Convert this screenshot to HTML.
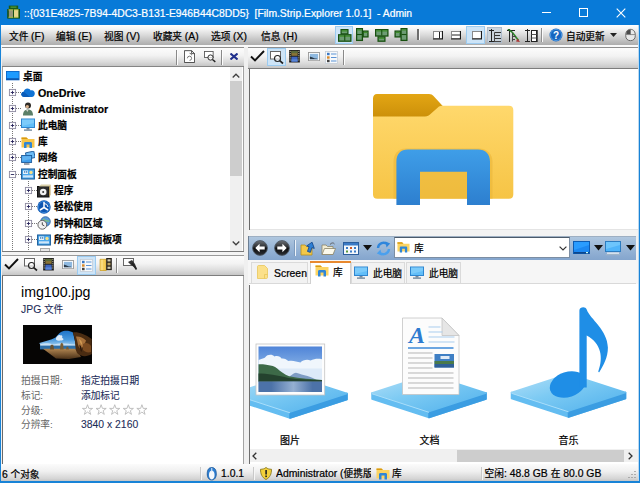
<!DOCTYPE html>
<html><head><meta charset="utf-8"><title>Film.Strip.Explorer</title>
<style>
*{margin:0;padding:0;box-sizing:border-box}
html,body{width:640px;height:483px;overflow:hidden;background:#fff}
body{position:relative;font-family:"Liberation Sans","Noto Sans CJK SC",sans-serif;font-size:10px;color:#000}
.a{position:absolute}
.t{position:absolute;white-space:nowrap;line-height:12px;height:12px;font-size:9.7px;-webkit-text-stroke:.22px currentColor}
.t b,.t i{font-style:normal;font-weight:inherit;font-size:10.4px}
.tb{background:linear-gradient(#fcfcfc 0%,#f3f3f3 40%,#dcdcdc 75%,#c6c6c6 100%)}
.tree .t{font-weight:bold;font-size:9.7px}
.tree .t b{font-size:10.7px}
.lbl{color:#666;-webkit-text-stroke:0}
.val{color:#1b2b58;-webkit-text-stroke:.08px}
</style></head><body>
<div class="a" style="left:0px;top:0px;width:640px;height:483px;background:#1883d7;"></div>
<div class="a" style="left:0px;top:0px;width:640px;height:25px;background:#087ad8;"></div>
<div class="t " style="left:24px;top:7.5px;color:#fff"><b style="font-size:10.35px">::{031E4825-7B94-4DC3-B131-E946B44C8DD5}&nbsp; [Film.Strip.Explorer 1.0.1]&nbsp; - Admin</b></div>
<svg class="a" style="left:7px;top:5px" width="14" height="14" viewBox="0 0 14 14"><rect x="1.800" y=".6" width="9.400" height="4" fill="#1a5a18"/>
<rect x=".2" y="4" width="12.800" height="9.600" fill="#154f14"/>
<rect x="3.500" y="1.500" width="6" height="1.300" fill="#4f9a3a"/>
<rect x="1.800" y="5" width="4.200" height="7" fill="#97957a"/><rect x="6.800" y="5" width="4.600" height="7" fill="#e6d68c"/>
<rect x="1.500" y="4.300" width="10" height="1" fill="#b8c850"/><rect x="1.500" y="11.800" width="10" height="1" fill="#b8c850"/>
<rect x="6" y="4.300" width=".9" height="8.500" fill="#154f14"/></svg>
<div class="a" style="left:542px;top:12px;width:9px;height:1px;background:#fff;"></div>
<div class="a" style="left:579px;top:8px;width:9px;height:9px;border:1px solid #fff"></div>
<svg class="a" style="left:616px;top:7.5px" width="10" height="10" viewBox="0 0 10 10"><path d="M.7 .7L9.300 9.300M9.300 .7L.7 9.300" stroke="#fff" stroke-width="1.100" fill="none"/></svg>
<div class="a" style="left:1px;top:25px;width:637px;height:456px;background:#f0f0f0;"></div>
<div class="a" style="left:638px;top:25px;width:1px;height:456px;background:#bcd9f0;"></div>
<div class="a" style="left:1px;top:25px;width:637px;height:20px;background:linear-gradient(#ffffff 0%,#f4f4f4 20%,#dadada 50%,#bebebe 80%,#adadad 100%);"></div>
<div class="a" style="left:1px;top:45px;width:637px;height:2px;background:#fafafa;"></div>
<div class="t " style="left:9px;top:30.7px;">文件 <b>(F)</b></div>
<div class="t " style="left:56px;top:30.7px;">编辑 <b>(E)</b></div>
<div class="t " style="left:104px;top:30.7px;">视图 <b>(V)</b></div>
<div class="t " style="left:153px;top:30.7px;">收藏夹 <b>(A)</b></div>
<div class="t " style="left:211px;top:30.7px;">选项 <b>(X)</b></div>
<div class="t " style="left:261px;top:30.7px;">信息 <b>(H)</b></div>
<div class="a" style="left:335px;top:26px;width:18px;height:18px;background:#cde4f7;border:1px solid #9ccbf0"></div>
<svg class="a" style="left:338px;top:28.7px" width="14" height="14" viewBox="0 0 14 14"><rect x="3.1" y="0.6" width="6.8" height="4.3" fill="#6d9c74" stroke="#17500f" stroke-width="1.300"/><rect x="3.8" y="1.3" width="5.4" height="1.200" fill="#3f8f2a"/><rect x="0.6" y="5.8" width="12.3" height="6.3999999999999995" fill="#6d9c74" stroke="#17500f" stroke-width="1.300"/><rect x="1.3" y="6.5" width="10.9" height="1.200" fill="#3f8f2a"/><path d="M6.75 6.2V11.8" stroke="#17500f" stroke-width="1.100"/></svg>
<svg class="a" style="left:356px;top:27.8px" width="14" height="14" viewBox="0 0 14 14"><rect x="0.6" y="0.6" width="5.8" height="11.8" fill="#6d9c74" stroke="#17500f" stroke-width="1.300"/><rect x="1.3" y="1.3" width="4.4" height="1.200" fill="#3f8f2a"/><path d="M1 6.5H6" stroke="#17500f" stroke-width="1.100"/><rect x="7.199999999999999" y="3.1" width="4.8" height="5.8" fill="#6d9c74" stroke="#17500f" stroke-width="1.300"/><rect x="7.8999999999999995" y="3.8" width="3.4" height="1.200" fill="#3f8f2a"/></svg>
<svg class="a" style="left:374.5px;top:28.5px" width="14" height="14" viewBox="0 0 14 14"><rect x="0.6" y="0.6" width="12.3" height="6.3999999999999995" fill="#6d9c74" stroke="#17500f" stroke-width="1.300"/><rect x="1.3" y="1.3" width="10.9" height="1.200" fill="#3f8f2a"/><path d="M6.75 1V6.6" stroke="#17500f" stroke-width="1.100"/><rect x="3.1" y="7.8999999999999995" width="6.8" height="4.3" fill="#6d9c74" stroke="#17500f" stroke-width="1.300"/><rect x="3.8" y="8.6" width="5.4" height="1.200" fill="#3f8f2a"/></svg>
<svg class="a" style="left:393.5px;top:27.8px" width="14" height="14" viewBox="0 0 14 14"><rect x="7.1" y="0.6" width="5.8" height="11.8" fill="#6d9c74" stroke="#17500f" stroke-width="1.300"/><rect x="7.8" y="1.3" width="4.4" height="1.200" fill="#3f8f2a"/><path d="M7.5 6.5H12.5" stroke="#17500f" stroke-width="1.100"/><rect x="1.1" y="3.1" width="5.2" height="5.8" fill="#6d9c74" stroke="#17500f" stroke-width="1.300"/><rect x="1.8" y="3.8" width="3.8000000000000003" height="1.200" fill="#3f8f2a"/></svg>
<div class="a" style="left:417px;top:29px;width:2px;height:11px;background:#6e6e6e;"></div>
<div class="a" style="left:419px;top:29px;width:1px;height:11px;background:#f8f8f8;"></div>
<svg class="a" style="left:432.5px;top:30.5px" width="10" height="9" viewBox="0 0 10 9"><rect x=".5" y=".5" width="9" height="7" fill="#fff" stroke="#8a8a8a" stroke-width="1"/><path d="M0 8H10M9.500 0V8" stroke="#1a1a1a" stroke-width="1.200" fill="none"/><path d="M6.500 1V7.500" stroke="#222"/></svg>
<svg class="a" style="left:451px;top:30.5px" width="10" height="9" viewBox="0 0 10 9"><rect x=".5" y=".5" width="9" height="7" fill="#fff" stroke="#8a8a8a" stroke-width="1"/><path d="M0 8H10M9.500 0V8" stroke="#1a1a1a" stroke-width="1.200" fill="none"/><path d="M1 4H9" stroke="#222"/></svg>
<div class="a" style="left:466px;top:26px;width:19px;height:18px;background:#cde4f7;border:1px solid #9ccbf0"></div>
<svg class="a" style="left:471.5px;top:30.5px" width="10" height="9" viewBox="0 0 10 9"><rect x=".5" y=".5" width="9" height="7" fill="#fff" stroke="#8a8a8a" stroke-width="1"/><path d="M0 8H10M9.500 0V8" stroke="#1a1a1a" stroke-width="1.200" fill="none"/></svg>
<div class="a" style="left:487px;top:27px;width:15px;height:16px;background:#c9d3dc;border:1px solid #aebccb"></div>
<svg class="a" style="left:489px;top:29px" width="13" height="14" viewBox="0 0 13 14"><path d="M2.500 0V13M0 1.500H5M0 12.500H6" stroke="#222" fill="none"/><path d="M5.500 3.500H12M5.500 6.500H11M5.500 9.500H12" stroke="#333" fill="none"/><path d="M5.500 3.500V12.500H12" stroke="#444" fill="none"/></svg>
<svg class="a" style="left:507px;top:28.5px" width="14" height="14" viewBox="0 0 14 14"><path d="M2.500 0V13M0 1.500H8" stroke="#222" fill="none"/><path d="M1 0L5 3" stroke="#2a7a2a" stroke-width="1.600"/><path d="M5 3L11.500 11.500" stroke="#2f8a2a" stroke-width="1.700"/><path d="M5.500 7.500H9M5.500 10.500H8M5.500 4V12.500" stroke="#444" fill="none"/><path d="M10.500 9.500l2.500 3.500-4-.5z" fill="#a33"/></svg>
<svg class="a" style="left:525px;top:28.5px" width="13" height="14" viewBox="0 0 13 14"><path d="M2.500 0V13M0 1.500H5M0 12.500H5" stroke="#222" fill="none"/><rect x="6.500" y="1.500" width="5" height="11" fill="#fff" stroke="#222"/><path d="M6.500 5.500H11.500M6.500 9H11.500" stroke="#555"/><path d="M12.500 1V13" stroke="#555"/></svg>
<div class="a" style="left:541px;top:28px;width:1px;height:14px;background:#8f8f8f;"></div>
<div class="a" style="left:542px;top:28px;width:1px;height:14px;background:#fafafa;"></div>
<svg class="a" style="left:548.5px;top:27.5px" width="14" height="14" viewBox="0 0 14 14"><circle cx="7" cy="7" r="6.5" fill="#1565c0"/><circle cx="7" cy="7" r="5.6" fill="none" stroke="#5aa2e6" stroke-width=".8"/><text x="7" y="10.6" font-size="10" font-weight="bold" text-anchor="middle" fill="#fff" font-family="Liberation Sans,sans-serif">?</text></svg>
<div class="t " style="left:566px;top:30.5px;">自动更新</div>
<svg class="a" style="left:610px;top:33px" width="7" height="4" viewBox="0 0 7 4"><path d="M0 0H7L3.5 4z" fill="#222"/></svg>
<svg class="a" style="left:624.5px;top:28px" width="11" height="14" viewBox="0 0 13 15"><path d="M6.5 .8C10.5 .8 12.2 4 12.2 8 12.2 12 10 14.2 6.5 14.2 3 14.2 .8 12 .8 8 .8 4 2.500 .8 6.5 .8z" fill="#e9e9e9" stroke="#555" stroke-width="1"/><path d="M6.500 1V7M1.200 7H11.800" stroke="#666" stroke-width=".8" fill="none"/><path d="M1.500 6.500C1.500 3 3 1.300 6.200 1.300V6.500z" fill="#4a4a4a"/></svg>
<div class="a" style="left:2px;top:47px;width:242px;height:1px;background:#8e8e8e;"></div>
<div class="a tb" style="left:2px;top:48px;width:242px;height:18px"></div>
<div class="a" style="left:2px;top:66px;width:242px;height:1px;background:#858585;"></div>
<div class="a" style="left:176px;top:50px;width:1px;height:15px;background:#8a8a8a;"></div>
<div class="a" style="left:177px;top:50px;width:1px;height:15px;background:#fdfdfd;"></div>
<svg class="a" style="left:184px;top:49.6px" width="11" height="13.2" viewBox="0 0 13 15"><path d="M.5 .5H9L12.500 4V14.500H.5z" fill="#fff" stroke="#333"/><path d="M9 .5V4H12.500" fill="none" stroke="#333"/><path d="M4 9.500a2.500 2.500 0 1 1 2.500 2.500M6.500 3.500a2.500 2.500 0 0 1 2.500 2.500" fill="none" stroke="#555" stroke-width=".9"/></svg>
<svg class="a" style="left:203.5px;top:50.5px" width="12.2" height="12.2" viewBox="0 0 14 14"><rect x=".5" y=".5" width="10" height="7" fill="#fff" stroke="#555"/><circle cx="7.500" cy="7.500" r="3" fill="#fff" fill-opacity=".7" stroke="#222" stroke-width="1.100"/><path d="M9.700 9.700L13 12.500" stroke="#222" stroke-width="1.600"/></svg>
<div class="a" style="left:221px;top:50px;width:1px;height:15px;background:#8a8a8a;"></div>
<div class="a" style="left:222px;top:50px;width:1px;height:15px;background:#fdfdfd;"></div>
<svg class="a" style="left:230px;top:53px" width="8" height="7" viewBox="0 0 8 7"><path d="M.5 .5L7.500 6.500M7.500 .5L.5 6.500" stroke="#1f2f8c" stroke-width="2" fill="none"/></svg>
<div class="a" style="left:2px;top:67px;width:242px;height:184px;background:#fff;"></div>
<div class="a" style="left:2px;top:67px;width:1px;height:184px;background:#a0a0a0;"></div>
<div class="a" style="left:243px;top:67px;width:1px;height:185px;background:#a4a4a4;"></div>
<div class="a" style="left:230px;top:67px;width:12px;height:184px;background:#f0f0f0;"></div>
<div class="a" style="left:230px;top:81px;width:12px;height:95px;background:#cdcdcd;"></div>
<svg class="a" style="left:232px;top:72.5px" width="8" height="5" viewBox="0 0 8 5"><path d="M.7 4.500L4 1.200 7.300 4.500" stroke="#404040" stroke-width="1.300" fill="none"/></svg>
<svg class="a" style="left:232px;top:241px" width="8" height="5" viewBox="0 0 8 5"><path d="M.7 .5L4 3.800 7.300 .5" stroke="#404040" stroke-width="1.300" fill="none"/></svg>
<div class="tree"><div class="a" style="left:12px;top:83px;width:1px;height:168px;background:repeating-linear-gradient(#777 0 1px,transparent 1px 2px);"></div>
<div class="a" style="left:28px;top:181px;width:1px;height:70px;background:repeating-linear-gradient(#777 0 1px,transparent 1px 2px);"></div>
<svg class="a" style="left:6px;top:69px" width="14" height="14" viewBox="0 0 14 14"><rect x="0" y="2" width="13.500" height="9.300" fill="#0c62c4"/><rect x=".8" y="2.800" width="11.900" height="6.700" fill="#1e9bff"/><rect x=".8" y="9.500" width="11.900" height="1" fill="#0a4fa0"/></svg>
<div class="t " style="left:23px;top:70.8px;">桌面</div>
<div class="a" style="left:16px;top:92px;width:5px;height:1px;background:repeating-linear-gradient(90deg,#777 0 1px,transparent 1px 2px);"></div>
<svg class="a" style="left:8px;top:88px" width="9" height="9" viewBox="0 0 9 9"><rect x="1.400" y="1.400" width="6.200" height="6.200" fill="#fff" stroke="#8d8aa0" stroke-width=".9"/><path d="M2.800 4.500H6.200" stroke="#26225a" stroke-width=".9"/><path d="M4.500 2.800V6.200" stroke="#26225a" stroke-width=".9"/></svg>
<svg class="a" style="left:21px;top:86px" width="14" height="14" viewBox="0 0 14 14"><path d="M3.500 11C1.500 11 .3 9.800 .3 8.300C.3 6.900 1.300 5.900 2.700 5.700C3 3.800 4.500 2.500 6.400 2.500C7.900 2.500 9.100 3.300 9.800 4.500C10.100 4.400 10.500 4.300 10.900 4.300C12.600 4.300 13.800 5.700 13.800 7.600C13.800 9.500 12.500 11 10.800 11z" fill="#1173d4"/><path d="M3.500 11C1.500 11 .3 9.800 .3 8.300C.3 6.900 1.300 5.900 2.700 5.700L9 11z" fill="#0a5cb8"/></svg>
<div class="t " style="left:38px;top:87.13px;"><b>OneDrive</b></div>
<div class="a" style="left:16px;top:108px;width:5px;height:1px;background:repeating-linear-gradient(90deg,#777 0 1px,transparent 1px 2px);"></div>
<svg class="a" style="left:8px;top:104px" width="9" height="9" viewBox="0 0 9 9"><rect x="1.400" y="1.400" width="6.200" height="6.200" fill="#fff" stroke="#8d8aa0" stroke-width=".9"/><path d="M2.800 4.500H6.200" stroke="#26225a" stroke-width=".9"/><path d="M4.500 2.800V6.200" stroke="#26225a" stroke-width=".9"/></svg>
<svg class="a" style="left:21px;top:102px" width="14" height="14" viewBox="0 0 14 14"><circle cx="7" cy="3.600" r="3" fill="#2e2a26"/><circle cx="6.300" cy="4.600" r="1.700" fill="#d8b08a"/><path d="M2 13.500C2 9.500 3.800 7.500 7 7.500C10.200 7.500 12 9.500 12 13.500z" fill="#5a7f68"/><path d="M5 7.700L6.300 10 7.500 7.700z" fill="#d8d8d0"/></svg>
<div class="t " style="left:38px;top:103.46px;"><b>Administrator</b></div>
<div class="a" style="left:16px;top:125px;width:5px;height:1px;background:repeating-linear-gradient(90deg,#777 0 1px,transparent 1px 2px);"></div>
<svg class="a" style="left:8px;top:121px" width="9" height="9" viewBox="0 0 9 9"><rect x="1.400" y="1.400" width="6.200" height="6.200" fill="#fff" stroke="#8d8aa0" stroke-width=".9"/><path d="M2.800 4.500H6.200" stroke="#26225a" stroke-width=".9"/><path d="M4.500 2.800V6.200" stroke="#26225a" stroke-width=".9"/></svg>
<svg class="a" style="left:21px;top:118px" width="14" height="14" viewBox="0 0 14 14"><rect x=".5" y="1" width="13" height="8.500" fill="#62bef8" stroke="#2f86d0" stroke-width="1"/><path d="M1 1.500H13V5L1 8z" fill="#8ed4fc" fill-opacity=".6"/><rect x="5.500" y="10" width="3" height="1.500" fill="#7a8a99"/><rect x="3" y="11.500" width="8" height="1.200" fill="#5e7890"/></svg>
<div class="t " style="left:38px;top:119.79px;">此电脑</div>
<div class="a" style="left:16px;top:141px;width:5px;height:1px;background:repeating-linear-gradient(90deg,#777 0 1px,transparent 1px 2px);"></div>
<svg class="a" style="left:8px;top:137px" width="9" height="9" viewBox="0 0 9 9"><rect x="1.400" y="1.400" width="6.200" height="6.200" fill="#fff" stroke="#8d8aa0" stroke-width=".9"/><path d="M2.800 4.500H6.200" stroke="#26225a" stroke-width=".9"/><path d="M4.500 2.800V6.200" stroke="#26225a" stroke-width=".9"/></svg>
<svg class="a" style="left:21px;top:135px" width="14" height="14" viewBox="0 0 14 14"><path d="M.5 2.500H5.500L7 4H13.500V12.500H.5z" fill="#f7c64a"/><path d="M.5 2.500H5.500L7 4H.5z" fill="#d99a12"/><path d="M3 13V8.500C3 7.500 3.600 7 4.500 7H9.500C10.400 7 11 7.500 11 8.500V13H8.500V9.500H5.500V13z" fill="#2f86d6"/></svg>
<div class="t " style="left:38px;top:136.12px;">库</div>
<div class="a" style="left:16px;top:157px;width:5px;height:1px;background:repeating-linear-gradient(90deg,#777 0 1px,transparent 1px 2px);"></div>
<svg class="a" style="left:8px;top:153px" width="9" height="9" viewBox="0 0 9 9"><rect x="1.400" y="1.400" width="6.200" height="6.200" fill="#fff" stroke="#8d8aa0" stroke-width=".9"/><path d="M2.800 4.500H6.200" stroke="#26225a" stroke-width=".9"/><path d="M4.500 2.800V6.200" stroke="#26225a" stroke-width=".9"/></svg>
<svg class="a" style="left:21px;top:151px" width="14" height="14" viewBox="0 0 14 14"><rect x="5" y="1" width="8.500" height="6.500" fill="#6cbcf6" stroke="#1e5c9c" stroke-width=".9" transform="rotate(-12 9 4)"/><rect x=".6" y="4.500" width="10" height="7" fill="#3f9eec" stroke="#1e5c9c" stroke-width=".9"/><path d="M1.200 5.200H10V8L1.200 10z" fill="#7cc4f8" fill-opacity=".55"/><rect x="3" y="12.500" width="5.500" height="1" fill="#3a4a60"/></svg>
<div class="t " style="left:38px;top:152.45px;">网络</div>
<div class="a" style="left:16px;top:174px;width:5px;height:1px;background:repeating-linear-gradient(90deg,#777 0 1px,transparent 1px 2px);"></div>
<svg class="a" style="left:8px;top:170px" width="9" height="9" viewBox="0 0 9 9"><rect x="1.400" y="1.400" width="6.200" height="6.200" fill="#fff" stroke="#8d8aa0" stroke-width=".9"/><path d="M2.800 4.500H6.200" stroke="#26225a" stroke-width=".9"/></svg>
<svg class="a" style="left:21px;top:167px" width="14" height="14" viewBox="0 0 14 14"><rect x=".6" y="2" width="12.800" height="10" fill="#4aa8ee" stroke="#1d5f9d" stroke-width="1.100"/><rect x="2" y="3.500" width="5" height="3.500" fill="#e4f2fc"/><circle cx="10" cy="5.500" r="1.700" fill="#f4e08a"/><rect x="2" y="8.300" width="10" height="2.200" fill="#cfe6f8"/><rect x="3" y="4.300" width="1.300" height="1.300" fill="#2c6cb0"/><rect x="5" y="4.300" width="1.300" height="1.300" fill="#2c6cb0"/></svg>
<div class="t " style="left:38px;top:168.78px;">控制面板</div>
<div class="a" style="left:32px;top:190px;width:5px;height:1px;background:repeating-linear-gradient(90deg,#777 0 1px,transparent 1px 2px);"></div>
<svg class="a" style="left:24px;top:186px" width="9" height="9" viewBox="0 0 9 9"><rect x="1.400" y="1.400" width="6.200" height="6.200" fill="#fff" stroke="#8d8aa0" stroke-width=".9"/><path d="M2.800 4.500H6.200" stroke="#26225a" stroke-width=".9"/><path d="M4.500 2.800V6.200" stroke="#26225a" stroke-width=".9"/></svg>
<svg class="a" style="left:37px;top:184px" width="14" height="14" viewBox="0 0 14 14"><rect x=".5" y="2.500" width="11.500" height="10.500" fill="#2b2b2b" stroke="#111"/><path d="M2 2.500L4 .5H13.500L12 2.500z" fill="#d9cfa8"/><path d="M12 2.500L13.500 .5V11L12 13z" fill="#b89c5a"/><circle cx="6.200" cy="8" r="3.300" fill="#f2f2f2"/><circle cx="6.200" cy="8" r="1" fill="#333"/></svg>
<div class="t " style="left:54px;top:185.11px;">程序</div>
<div class="a" style="left:32px;top:206px;width:5px;height:1px;background:repeating-linear-gradient(90deg,#777 0 1px,transparent 1px 2px);"></div>
<svg class="a" style="left:24px;top:202px" width="9" height="9" viewBox="0 0 9 9"><rect x="1.400" y="1.400" width="6.200" height="6.200" fill="#fff" stroke="#8d8aa0" stroke-width=".9"/><path d="M2.800 4.500H6.200" stroke="#26225a" stroke-width=".9"/><path d="M4.500 2.800V6.200" stroke="#26225a" stroke-width=".9"/></svg>
<svg class="a" style="left:37px;top:200px" width="14" height="14" viewBox="0 0 14 14"><circle cx="7" cy="7" r="6.700" fill="#0e55b0"/><circle cx="7" cy="7" r="5.600" fill="none" stroke="#3f8fe0" stroke-width=".8"/><path d="M7 2V7.500L3 10M7 7.500L11 10" stroke="#fff" stroke-width="1.500" fill="none"/><path d="M7 3.500A4 4 0 0 1 11 7" stroke="#fff" stroke-width="1" fill="none"/></svg>
<div class="t " style="left:54px;top:201.44px;">轻松使用</div>
<div class="a" style="left:32px;top:223px;width:5px;height:1px;background:repeating-linear-gradient(90deg,#777 0 1px,transparent 1px 2px);"></div>
<svg class="a" style="left:24px;top:219px" width="9" height="9" viewBox="0 0 9 9"><rect x="1.400" y="1.400" width="6.200" height="6.200" fill="#fff" stroke="#8d8aa0" stroke-width=".9"/><path d="M2.800 4.500H6.200" stroke="#26225a" stroke-width=".9"/><path d="M4.500 2.800V6.200" stroke="#26225a" stroke-width=".9"/></svg>
<svg class="a" style="left:37px;top:216px" width="14" height="14" viewBox="0 0 14 14"><circle cx="8.500" cy="5.500" r="4.800" fill="#5a9ad8" stroke="#2c5f9c" stroke-width=".8"/><path d="M6 3C8 4 9 6 12.500 5" stroke="#7cc47a" stroke-width="1.300" fill="none"/><circle cx="5.300" cy="8.800" r="4.400" fill="#f2f2f2" stroke="#666" stroke-width="1"/><path d="M5.300 6.300V8.800L7.300 9.800" stroke="#333" stroke-width=".9" fill="none"/></svg>
<div class="t " style="left:54px;top:217.77px;">时钟和区域</div>
<div class="a" style="left:32px;top:239px;width:5px;height:1px;background:repeating-linear-gradient(90deg,#777 0 1px,transparent 1px 2px);"></div>
<svg class="a" style="left:24px;top:235px" width="9" height="9" viewBox="0 0 9 9"><rect x="1.400" y="1.400" width="6.200" height="6.200" fill="#fff" stroke="#8d8aa0" stroke-width=".9"/><path d="M2.800 4.500H6.200" stroke="#26225a" stroke-width=".9"/><path d="M4.500 2.800V6.200" stroke="#26225a" stroke-width=".9"/></svg>
<svg class="a" style="left:37px;top:233px" width="14" height="14" viewBox="0 0 14 14"><rect x=".6" y="2" width="12.800" height="10" fill="#4aa8ee" stroke="#1d5f9d" stroke-width="1.100"/><rect x="2" y="3.500" width="5" height="3.500" fill="#e4f2fc"/><circle cx="10" cy="5.500" r="1.700" fill="#f4e08a"/><rect x="2" y="8.300" width="10" height="2.200" fill="#cfe6f8"/><rect x="3" y="4.300" width="1.300" height="1.300" fill="#2c6cb0"/><rect x="5" y="4.300" width="1.300" height="1.300" fill="#2c6cb0"/></svg>
<div class="t " style="left:54px;top:234.1px;">所有控制面板项</div>
</div><div class="a" style="left:40px;top:248px;width:10px;height:3px;background:#e8e8e8;border:1px solid #aaa;border-bottom:0"></div>
<div class="a" style="left:248px;top:47px;width:390px;height:1px;background:#8e8e8e;"></div>
<div class="a tb" style="left:248px;top:48px;width:390px;height:20px"></div>
<div class="a" style="left:248px;top:68px;width:390px;height:1px;background:#7d7d7d;"></div>
<svg class="a" style="left:249.5px;top:50px" width="15" height="12" viewBox="0 0 15 12"><path d="M1 6.500L5 10.500 14 1" stroke="#111" stroke-width="1.900" fill="none"/></svg>
<div class="a" style="left:267px;top:48px;width:19px;height:18px;background:#cde4f7;border:1px solid #9ccbf0"></div>
<svg class="a" style="left:270px;top:50.5px" width="14" height="14" viewBox="0 0 14 14"><rect x=".5" y=".5" width="10" height="7.500" fill="#fdfdfd" stroke="#666"/><circle cx="7.500" cy="7.500" r="3" fill="#fff" fill-opacity=".6" stroke="#222" stroke-width="1.100"/><path d="M9.700 9.700L13 12.500" stroke="#222" stroke-width="1.700"/></svg>
<svg class="a" style="left:288.8px;top:50.2px" width="11" height="12.5" viewBox="0 0 12 14"><rect x="0" y="0" width="12" height="14" fill="#1c1c20"/><rect x="2.500" y="1" width="7" height="5.500" fill="#8a7436"/><rect x="2.500" y="1" width="7" height="2.500" fill="#5a6a3a"/><rect x="2.500" y="7.500" width="7" height="5.500" fill="#3f66c0"/><rect x="2.500" y="10.500" width="7" height="2.500" fill="#5a86d8"/><path d="M1.200 1V13M10.800 1V13" stroke="#c8c8a0" stroke-width="1" stroke-dasharray="1.200 1.200"/></svg>
<svg class="a" style="left:307.5px;top:52px" width="12" height="9.2" viewBox="0 0 13 10"><rect x=".5" y=".5" width="12" height="9" fill="#fff" stroke="#999"/><rect x="2" y="2" width="9" height="6" fill="#8fb9e0"/><path d="M2 8V5L5 6 7.500 7 9 7 11 8z" fill="#2c3c4c"/></svg>
<svg class="a" style="left:325px;top:51px" width="13" height="13" viewBox="0 0 13 13"><rect x=".5" y=".5" width="12" height="12" fill="#f7f9fb" stroke="#c4ccd6" stroke-width=".8"/><rect x="2" y="1.800" width="2.600" height="2.400" fill="#3b78c4"/><rect x="2" y="5.300" width="2.600" height="2.400" fill="#d98a2a"/><rect x="2" y="8.800" width="2.600" height="2.400" fill="#444"/><path d="M6 3H11.500M6 6.500H11.500M6 10H11.500" stroke="#5b93d6" stroke-width="1.200"/></svg>
<div class="a" style="left:343px;top:50px;width:1px;height:15px;background:#8a8a8a;"></div>
<div class="a" style="left:344px;top:50px;width:1px;height:15px;background:#fdfdfd;"></div>
<div class="a" style="left:249px;top:69px;width:389px;height:161px;background:#fff;"></div>
<div class="a" style="left:249px;top:69px;width:1px;height:161px;background:#6a6a6a;"></div>
<div class="a" style="left:250px;top:229px;width:388px;height:1px;background:#e4e4e4;"></div>
<svg class="a" style="left:368px;top:88px" width="152" height="124" viewBox="0 0 152 124"><defs>
<linearGradient id="fb" x1="0" y1="0" x2="0" y2="1"><stop offset="0" stop-color="#ffd86c"/><stop offset="1" stop-color="#f6c445"/></linearGradient>
<linearGradient id="ft" x1="0" y1="0" x2="0" y2="1"><stop offset="0" stop-color="#e3a614"/><stop offset="1" stop-color="#c98d08"/></linearGradient>
<linearGradient id="fa" x1="0" y1="0" x2="0" y2="1"><stop offset="0" stop-color="#3f9ee8"/><stop offset="1" stop-color="#2d7fcf"/></linearGradient>
</defs>
<path d="M5 10.500C5 8 6.500 6 9 6H61C63 6 64.500 6.800 65.500 8L74.500 17.700V32H5z" fill="url(#ft)"/>
<path d="M5 28.400H57C59.500 28.400 61 27.600 62.500 26L71 18.500C72 17.900 73 17.700 74.500 17.700H141C143.800 17.700 145.300 19.200 145.300 22V106.500C145.300 109.300 143.800 110.800 141 110.800H9.300C6.500 110.800 5 109.300 5 106.500z" fill="url(#fb)"/>
<path d="M25.500 110.800V74C25.500 66 30 60.500 38 60.500H111C119 60.500 124.500 66 124.500 74V110.800z" fill="#e9b437" fill-opacity=".55"/>
<path d="M28.400 117V73.500C28.400 66 32.500 61.400 40 61.400H110C117.500 61.400 122 66 122 73.500V117H99V83.700H52V117z" fill="url(#fa)"/>
</svg>
<div class="a" style="left:248px;top:230px;width:390px;height:6px;background:#f3f3f3;"></div>
<div class="a" style="left:248px;top:236px;width:388px;height:24px;background:linear-gradient(#8c98a6 0,#b0c7df 1px,#a0bbd9 35%,#90afd3 70%,#84a5cd 100%);"></div>
<div class="a" style="left:248px;top:236px;width:1px;height:24px;background:#6d7f94;"></div>
<svg class="a" style="left:251.5px;top:240px" width="16" height="16" viewBox="0 0 16 16"><defs><linearGradient id="nb0" x1="0" y1="0" x2="0" y2="1"><stop offset="0" stop-color="#6c7076"/><stop offset=".45" stop-color="#2a2c2f"/><stop offset=".5" stop-color="#0c0c0d"/><stop offset="1" stop-color="#2c3036"/></linearGradient></defs><circle cx="8" cy="8" r="7.400" fill="url(#nb0)" stroke="#4e5a68" stroke-width=".9"/><path d="M3.300 8L7.600 3.800V6.600H12.700V9.400H7.600V12.200z" fill="#fff"/></svg>
<svg class="a" style="left:273.5px;top:240px" width="16" height="16" viewBox="0 0 16 16"><defs><linearGradient id="nb1" x1="0" y1="0" x2="0" y2="1"><stop offset="0" stop-color="#6c7076"/><stop offset=".45" stop-color="#2a2c2f"/><stop offset=".5" stop-color="#0c0c0d"/><stop offset="1" stop-color="#2c3036"/></linearGradient></defs><circle cx="8" cy="8" r="7.400" fill="url(#nb1)" stroke="#4e5a68" stroke-width=".9"/><path d="M3.300 8L7.600 3.800V6.600H12.700V9.400H7.600V12.200z" fill="#fff" transform="translate(16 0) scale(-1 1)"/></svg>
<div class="a" style="left:294px;top:240px;width:1px;height:16px;background:#7d9bbd;"></div>
<div class="a" style="left:295px;top:240px;width:1px;height:16px;background:#eef4fa;"></div>
<svg class="a" style="left:300px;top:241px" width="15" height="15" viewBox="0 0 15 15"><path d="M1 4H5L6.500 5.500H12V14H1z" fill="#f2c84b" stroke="#b8901c" stroke-width=".8"/><path d="M9 11V6H6.500L10.500 .8 14.500 6H12V11z" fill="#2d7fd6" stroke="#15498c" stroke-width=".8" transform="rotate(18 10 6)"/></svg>
<svg class="a" style="left:321px;top:241px" width="15" height="15" viewBox="0 0 15 15"><path d="M1 4H5L6.500 5.500H12V13.500H1z" fill="#f1ecd4" stroke="#8a8468" stroke-width=".8"/><path d="M1 13.500L3.500 7.500H14.500L12 13.500z" fill="#fbf9ec" stroke="#8a8468" stroke-width=".8"/><path d="M9 3.500C10.500 1.500 12.500 1.500 13.500 3" stroke="#555" stroke-width=".9" fill="none"/></svg>
<svg class="a" style="left:343px;top:242px" width="16" height="13" viewBox="0 0 16 13"><rect x=".5" y=".5" width="15" height="12" fill="#f4f8fc" stroke="#2c5e9c"/><rect x="1" y="1" width="14" height="2.500" fill="#3b7bc6"/><rect x="3" y="5" width="2" height="2" fill="#3b7bc6"/><rect x="7" y="5" width="2" height="2" fill="#d05a2a"/><rect x="11" y="5" width="2" height="2" fill="#3b7bc6"/><rect x="3" y="8.500" width="2" height="2" fill="#5a9a3a"/><rect x="7" y="8.500" width="2" height="2" fill="#3b7bc6"/><rect x="11" y="8.500" width="2" height="2" fill="#3b7bc6"/></svg>
<svg class="a" style="left:363px;top:245px" width="9" height="5.5" viewBox="0 0 9 5.5"><path d="M0 0H9L4.500 5.500z" fill="#111"/></svg>
<svg class="a" style="left:376px;top:241px" width="15" height="15" viewBox="0 0 15 15"><path d="M2 7A5.500 5.500 0 0 1 11.500 3.500" stroke="#2f86dc" stroke-width="2.400" fill="none"/><path d="M9.500 .5L14.200 2.500 10.500 6.500z" fill="#2f86dc"/><path d="M13 8A5.500 5.500 0 0 1 3.500 11.500" stroke="#4aa0ee" stroke-width="2.400" fill="none"/><path d="M5.500 14.500L.8 12.500 4.500 8.500z" fill="#4aa0ee"/></svg>
<div class="a" style="left:394px;top:237px;width:176px;height:21px;background:#fff;border:1px solid #7c8ea3;border-top-color:#4b5a6b"></div>
<svg class="a" style="left:397px;top:240px" width="13" height="13" viewBox="0 0 14 14"><path d="M.5 2.500H5.500L7 4H13.500V12.500H.5z" fill="#fcd462"/><path d="M.5 2.500H5.500L7 4H.5z" fill="#d99a12"/><path d="M3 13.500V8.500C3 7.500 3.600 7 4.500 7H9.500C10.400 7 11 7.500 11 8.500V13.500H8.500V9.500H5.500V13.500z" fill="#2f86d6"/></svg>
<div class="t " style="left:414px;top:243px;">库</div>
<svg class="a" style="left:559px;top:246px" width="8" height="5" viewBox="0 0 8 5"><path d="M.6 .6L4 4 7.400 .6" stroke="#333" stroke-width="1.200" fill="none"/></svg>
<svg class="a" style="left:573px;top:241px" width="17" height="14" viewBox="0 0 17 14"><rect x=".5" y=".5" width="16" height="12" fill="#2a9cff" stroke="#0d5cb4"/><path d="M1 9L16 4V12H1z" fill="#1c88f2"/><rect x="1" y="11" width="15" height="1.500" fill="#0c468c"/><rect x="13" y="11" width="2" height="1.200" fill="#cfe"/></svg>
<svg class="a" style="left:594px;top:245px" width="9" height="6" viewBox="0 0 9 6"><path d="M0 0H9L4.500 5.500z" fill="#111"/></svg>
<svg class="a" style="left:605px;top:241px" width="17" height="15" viewBox="0 0 17 15"><rect x=".5" y=".5" width="15" height="10" fill="#4fb4fa" stroke="#2c7cc0"/><path d="M1 1H15V4L1 8z" fill="#7accfc" fill-opacity=".7"/><rect x="2" y="11.500" width="12" height="1.300" fill="#e8eef4"/><rect x="1" y="13" width="14" height="1.200" fill="#9fb4c8"/></svg>
<svg class="a" style="left:626px;top:245px" width="9" height="6" viewBox="0 0 9 6"><path d="M0 0H9L4.500 5.500z" fill="#111"/></svg>
<div class="a" style="left:248px;top:260px;width:390px;height:24px;background:#f6f6f6;"></div>
<div class="a" style="left:249px;top:283px;width:387px;height:1px;background:#d9d9d9;"></div>
<div class="a" style="left:251px;top:262px;width:57px;height:21px;background:#f2f2f2;border:1px solid #dadada;border-bottom:0"></div>
<div class="a" style="left:310px;top:262px;width:41px;height:23px;background:#fff;border:1px solid #d0d0d0;border-bottom:0"></div>
<div class="a" style="left:310px;top:261px;width:41px;height:2px;background:#e8892f;"></div>
<div class="a" style="left:351px;top:262px;width:54px;height:21px;background:#f2f2f2;border:1px solid #dadada;border-bottom:0"></div>
<div class="a" style="left:406px;top:262px;width:55px;height:21px;background:#f2f2f2;border:1px solid #dadada;border-bottom:0"></div>
<svg class="a" style="left:257px;top:265px" width="11" height="14" viewBox="0 0 11 14"><path d="M.5 1.500C.5 1 1 .5 1.500 .5H7.500L10.500 3.500V12.500C10.500 13 10 13.500 9.500 13.500H.5z" fill="#fbe08a" stroke="#e9c659" stroke-width=".8"/><path d="M7.500 13.500V9.500H10.500" fill="none" stroke="#e9c659" stroke-width=".8"/></svg>
<div class="t " style="left:274px;top:267.5px;"><b>Screen</b></div>
<svg class="a" style="left:315px;top:263px" width="14" height="14" viewBox="0 0 14 14"><path d="M.5 2.500H5.500L7 4H13.500V12.500H.5z" fill="#fcd462"/><path d="M.5 2.500H5.500L7 4H.5z" fill="#d99a12"/><path d="M3 13.500V8.500C3 7.500 3.600 7 4.500 7H9.500C10.400 7 11 7.500 11 8.500V13.500H8.500V9.500H5.500V13.500z" fill="#2f86d6"/></svg>
<div class="t " style="left:333px;top:266.5px;">库</div>
<svg class="a" style="left:354px;top:266px" width="14" height="14" viewBox="0 0 14 14"><rect x=".5" y="1" width="13" height="8.500" fill="#62bef8" stroke="#2f86d0" stroke-width="1"/><path d="M1 1.500H13V5L1 8z" fill="#8ed4fc" fill-opacity=".6"/><rect x="5.500" y="10" width="3" height="1.500" fill="#7a8a99"/><rect x="3" y="11.500" width="8" height="1.200" fill="#5e7890"/></svg>
<div class="t " style="left:373px;top:267.5px;">此电脑</div>
<svg class="a" style="left:410px;top:266px" width="14" height="14" viewBox="0 0 14 14"><rect x=".5" y="1" width="13" height="8.500" fill="#62bef8" stroke="#2f86d0" stroke-width="1"/><path d="M1 1.500H13V5L1 8z" fill="#8ed4fc" fill-opacity=".6"/><rect x="5.500" y="10" width="3" height="1.500" fill="#7a8a99"/><rect x="3" y="11.500" width="8" height="1.200" fill="#5e7890"/></svg>
<div class="t " style="left:429px;top:267.5px;">此电脑</div>
<div class="a" style="left:249px;top:284px;width:389px;height:165px;background:#fff;"></div>
<svg class="a" style="left:249px;top:284px" width="389" height="165" viewBox="0 0 389 165"><defs><linearGradient id="pg" x1="0" y1="0" x2="1" y2="1"><stop offset="0" stop-color="#b4e0f8"/><stop offset=".45" stop-color="#7ccaf3"/><stop offset="1" stop-color="#4fb0ec"/></linearGradient><linearGradient id="wat" x1="0" y1="0" x2="1" y2="0"><stop offset=".2" stop-color="#b4cae4" stop-opacity="0"/><stop offset=".55" stop-color="#b4cae4" stop-opacity=".7"/><stop offset=".85" stop-color="#b4cae4" stop-opacity="0"/></linearGradient><linearGradient id="sky" x1="0" y1="0" x2="0" y2="1"><stop offset="0" stop-color="#4f84d8"/><stop offset=".5" stop-color="#8ab4e6"/><stop offset="1" stop-color="#b8d6f0"/></linearGradient></defs><path d="M-16 109.5L41 128.0L98 109.5V115.5L41 134.0L-16 115.5z" fill="#64bdf1" stroke="#64bdf1" stroke-width="1.500" stroke-linejoin="round"/><path d="M41 128.0L98 109.5V115.5L41 134.0z" fill="#3b9de2" stroke="#3b9de2" stroke-width="1.500" stroke-linejoin="round"/><path d="M-16 109.5L41 91.0L98 109.5L41 128.0z" fill="url(#pg)" stroke="url(#pg)" stroke-width="1.500" stroke-linejoin="round"/><path d="M-16 110.3L41 128.8" stroke="#a9defa" stroke-width="1" fill="none"/><rect x="7" y="60" width="68.700" height="51" fill="#fdfdfd" stroke="#c4c4c4" stroke-width=".8"/><rect x="9.5" y="62.5" width="63.500" height="45.500" fill="url(#sky)"/><path d="M9.5 76.1C12.5 74.5 15.5 74.5 16.5 73.0C18.5 70.0 23.5 70.0 25.5 72.5C28.5 71.5 31.5 72.5 32.5 74.5C35.5 74.0 37.5 75.5 39.5 77.0C43.5 76.0 47.5 77.5 51.5 78.5C53.5 76.0 58.5 75.0 61.5 76.5C65.5 74.5 69.5 74.5 73.0 75.2V97.5H9.5z" fill="#f0f6fc"/><path d="M9.5 84.5H73.0V97.5H9.5z" fill="#d4e6f6" fill-opacity=".7"/><path d="M40.5 92.5C43.5 90.5 45.5 88.8 47.0 88.8C50.5 89.5 54.5 91.5 58.5 92.0C62.5 93.5 65.5 94.5 67.5 96.0H40.5z" fill="#7d9cc4"/><path d="M9.5 80.3C13.5 80.0 16.5 80.5 18.5 81.1C22.5 81.5 25.5 82.5 28.2 84.5C31.5 87.5 35.5 90.5 40.1 92.2C45.5 93.5 51.5 94.0 57.0 94.8C62.5 95.3 67.5 95.5 73.0 96.1V97.5H9.5z" fill="#3d6a48"/><path d="M9.5 89.5C17.5 89.5 29.5 91.5 39.5 94.0C49.5 95.5 61.5 95.8 73.0 96.3V97.7H9.5z" fill="#24422e"/><rect x="9.5" y="97.5" width="63.500" height="10.500" fill="#4c72a8"/><rect x="9.5" y="97.5" width="63.500" height="10.500" fill="url(#wat)"/><path d="M123 109L180 127.5L237 109V115L180 133.5L123 115z" fill="#64bdf1" stroke="#64bdf1" stroke-width="1.500" stroke-linejoin="round"/><path d="M180 127.5L237 109V115L180 133.5z" fill="#3b9de2" stroke="#3b9de2" stroke-width="1.500" stroke-linejoin="round"/><path d="M123 109L180 90.5L237 109L180 127.5z" fill="url(#pg)" stroke="url(#pg)" stroke-width="1.500" stroke-linejoin="round"/><path d="M123 109.8L180 128.3" stroke="#a9defa" stroke-width="1" fill="none"/><path d="M153.5 34H193.0L210.0 51.5V110.5H153.5z" fill="#fcfcfc" stroke="#c4c4c4" stroke-width=".8"/><path d="M193.0 34V51.5H210.0z" fill="#e6e6e6" stroke="#c4c4c4" stroke-width=".8"/><text x="160.0" y="59" font-family="Liberation Serif,serif" font-style="italic" font-weight="bold" font-size="24" fill="#2e7bd0">A</text><path d="M179.5 43H191.5M179.5 48H193.5M179.5 53H205.5M179.5 58H205.5" stroke="#a9cdee" stroke-width="1"/><path d="M159.0 64H204.5" stroke="#3c8ad8" stroke-width="1.300"/><path d="M159.0 69H183.5M159.0 74H183.5M159.0 79H183.5M159.0 84H183.5M159.0 89H204.5M159.0 94H204.5M159.0 99H204.5M159.0 104H204.5" stroke="#b5b5b5" stroke-width="1"/><rect x="185.5" y="70" width="19.500" height="13.500" fill="#3f7fc4"/><rect x="185.5" y="77" width="19.500" height="3" fill="#4a7a4a"/><rect x="185.5" y="80" width="19.500" height="3.500" fill="#2f5f96"/><rect x="191.5" y="72" width="9" height="3" fill="#dfeaf6"/><path d="M262.5 108.5L319.5 127.0L376.5 108.5V114.5L319.5 133.0L262.5 114.5z" fill="#64bdf1" stroke="#64bdf1" stroke-width="1.500" stroke-linejoin="round"/><path d="M319.5 127.0L376.5 108.5V114.5L319.5 133.0z" fill="#3b9de2" stroke="#3b9de2" stroke-width="1.500" stroke-linejoin="round"/><path d="M262.5 108.5L319.5 90.0L376.5 108.5L319.5 127.0z" fill="url(#pg)" stroke="url(#pg)" stroke-width="1.500" stroke-linejoin="round"/><path d="M262.5 109.3L319.5 127.8" stroke="#a9defa" stroke-width="1" fill="none"/><ellipse cx="318.79999999999995" cy="100.5" rx="18.500" ry="12.500" transform="rotate(-18 318.79999999999995 100.5)" fill="#1f8ee6"/><path d="M330.4 26.5C330.4 23.0 336.4 22.0 337.7 25.5C341.4 35.5 358.4 45.5 358.9 63.5C358.9 73.5 354.4 81.5 350.4 88.0C349.9 88.5 348.9 88.0 349.4 87.0C354.4 73.5 352.4 59.5 337.7 51.5V103.5H330.4z" fill="#1f8ee6"/></svg>
<div class="t " style="left:280px;top:435px;font-size:10px">图片</div>
<div class="t " style="left:419.5px;top:435px;font-size:10px">文档</div>
<div class="t " style="left:558.5px;top:435px;font-size:10px">音乐</div>
<div class="a" style="left:249px;top:449px;width:389px;height:13px;background:#f0f0f0;"></div>
<div class="a" style="left:457px;top:450px;width:167px;height:12px;background:#cdcdcd;"></div>
<svg class="a" style="left:252px;top:452px" width="5" height="8" viewBox="0 0 5 8"><path d="M4.300 .7L1 4 4.300 7.300" stroke="#333" stroke-width="1.300" fill="none"/></svg>
<svg class="a" style="left:628px;top:452px" width="5" height="8" viewBox="0 0 5 8"><path d="M.7 .7L4 4 .7 7.300" stroke="#333" stroke-width="1.300" fill="none"/></svg>
<div class="a" style="left:249px;top:462px;width:389px;height:2px;background:#fff;"></div>
<div class="a" style="left:249px;top:285px;width:1px;height:179px;background:#6f6f6f;"></div>
<div class="a" style="left:2px;top:251px;width:242px;height:1px;background:#7a7a7a;"></div>
<div class="a" style="left:2px;top:252px;width:242px;height:3px;background:#f4f4f4;"></div>
<div class="a" style="left:2px;top:255px;width:242px;height:1px;background:#9a9a9a;"></div>
<div class="a tb" style="left:2px;top:256px;width:242px;height:19px"></div>
<div class="a" style="left:2px;top:275px;width:242px;height:1px;background:#7d7d7d;"></div>
<svg class="a" style="left:4px;top:257.5px" width="15" height="12" viewBox="0 0 15 12"><path d="M1 6.500L5 10.500 14 1" stroke="#111" stroke-width="1.900" fill="none"/></svg>
<svg class="a" style="left:24px;top:258px" width="14" height="14" viewBox="0 0 14 14"><rect x=".5" y=".5" width="10" height="7.500" fill="#fdfdfd" stroke="#666"/><circle cx="7.500" cy="7.500" r="3" fill="#fff" fill-opacity=".6" stroke="#222" stroke-width="1.100"/><path d="M9.700 9.700L13 12.500" stroke="#222" stroke-width="1.700"/></svg>
<svg class="a" style="left:43.2px;top:258px" width="11" height="12.5" viewBox="0 0 12 14"><rect x="0" y="0" width="12" height="14" fill="#1c1c20"/><rect x="2.500" y="1" width="7" height="5.500" fill="#8a7436"/><rect x="2.500" y="1" width="7" height="2.500" fill="#5a6a3a"/><rect x="2.500" y="7.500" width="7" height="5.500" fill="#3f66c0"/><rect x="2.500" y="10.500" width="7" height="2.500" fill="#5a86d8"/><path d="M1.200 1V13M10.800 1V13" stroke="#c8c8a0" stroke-width="1" stroke-dasharray="1.200 1.200"/></svg>
<svg class="a" style="left:62px;top:259.8px" width="12" height="9.2" viewBox="0 0 13 10"><rect x=".5" y=".5" width="12" height="9" fill="#fff" stroke="#999"/><rect x="2" y="2" width="9" height="6" fill="#8fb9e0"/><path d="M2 8V5L5 6 7.500 7 9 7 11 8z" fill="#2c3c4c"/></svg>
<div class="a" style="left:77px;top:256px;width:19px;height:19px;background:#cde4f7;border:1px solid #9ccbf0"></div>
<svg class="a" style="left:80px;top:259px" width="13" height="13" viewBox="0 0 13 13"><rect x=".5" y=".5" width="12" height="12" fill="#f7f9fb" stroke="#c4ccd6" stroke-width=".8"/><rect x="2" y="1.800" width="2.600" height="2.400" fill="#3b78c4"/><rect x="2" y="5.300" width="2.600" height="2.400" fill="#d98a2a"/><rect x="2" y="8.800" width="2.600" height="2.400" fill="#444"/><path d="M6 3H11.500M6 6.500H11.500M6 10H11.500" stroke="#5b93d6" stroke-width="1.200"/></svg>
<svg class="a" style="left:98.5px;top:258px" width="13.5" height="13" viewBox="0 0 14 15"><path d="M.5 1.500H7.500V14.500H.5z" fill="#f5cd58" stroke="#c99a1c" stroke-width=".9"/><path d="M1 2H4V14H1z" fill="#fbe08a" fill-opacity=".7"/><rect x="7.500" y="0" width="6.500" height="14" fill="#26221c"/><rect x="9" y="1.500" width="3.500" height="2.500" fill="#cfc9b0"/><rect x="9" y="5.500" width="3.500" height="3" fill="#b8a060"/><rect x="9" y="10" width="3.500" height="2.500" fill="#cfc9b0"/></svg>
<div class="a" style="left:116px;top:258px;width:1px;height:15px;background:#8a8a8a;"></div>
<div class="a" style="left:117px;top:258px;width:1px;height:15px;background:#fdfdfd;"></div>
<svg class="a" style="left:123px;top:258px" width="15" height="13" viewBox="0 0 15 13"><rect x=".5" y=".5" width="10" height="7" fill="#fdfdfd" stroke="#666"/><path d="M5 4L9 2 12 6 14 11 11 9 8 7z" fill="#333"/><path d="M9 5L13.500 11.500" stroke="#222" stroke-width="1.600"/></svg>
<div class="a" style="left:2px;top:276px;width:241px;height:188px;background:#fff;"></div>
<div class="a" style="left:2px;top:276px;width:1px;height:188px;background:#6a6a6a;"></div>
<div class="a" style="left:243px;top:276px;width:1px;height:188px;background:#a4a4a4;"></div>
<div class="t " style="left:21px;top:287px;line-height:18px;height:18px;top:283px;-webkit-text-stroke:0"><b style="font-size:14.200px">img100.jpg</b></div>
<div class="t val" style="left:21px;top:304px;"><b>JPG</b> 文件</div>
<svg class="a" style="left:23px;top:325px" width="69" height="39" viewBox="0 0 69 39"><defs><linearGradient id="tsand" x1="0" y1="0" x2="0" y2="1"><stop offset="0" stop-color="#b08550"/><stop offset="1" stop-color="#4a3118"/></linearGradient><linearGradient id="tsky" x1="0" y1="0" x2="0" y2="1"><stop offset="0" stop-color="#1f74c8"/><stop offset=".6" stop-color="#4a9ade"/><stop offset="1" stop-color="#a8d2f0"/></linearGradient></defs>
<rect width="69" height="39" fill="#060504"/>
<path d="M16.300 18C22 16 28 15 32.500 12.500C35 10 36 8 38 6.900C41 5.400 46 5 50 7.500L53 21H18z" fill="url(#tsky)"/>
<path d="M33 13C34.500 10.500 36 9.500 37.500 10.500C39 9.500 40 11.500 39 13C42 14 40 16 37 15.500C35 16.500 32 15 33 13z" fill="#eef4fa" fill-opacity=".9"/>
<path d="M17 19.500C22 17.500 27 18.500 30 19.500C35 18 42 18 52 19.500V21H17z" fill="#d6e8f6" fill-opacity=".8"/>
<rect x="17" y="20.600" width="36" height="3.800" fill="#2d6fa8"/>
<path d="M20 23.700L33 33.500L46 34L58 32C56 28 54 25 52 23.700z" fill="url(#tsand)"/>
<path d="M27 24.400L27.500 20.500L29 19.400L30.500 20.500L31 24.400z" fill="#6a5230"/>
<path d="M37 24.400L37.500 19L39 17.500L40.200 19.500L40.600 24.400z" fill="#7a5e34"/>
<path d="M43 24.400L43.500 22L45 21.500L46 24.400z" fill="#7a5e34"/>
<path d="M50 7.500C54 6.500 62 9 68.700 14V29C64 32 58 32 54 28C52 24 52.500 20 52 16C51.500 12 50.500 10 50 7.500z" fill="#4a2c12"/>
<path d="M53 11.500C56 11 60 12.500 63 15.500C62 19 60 21 58 25C56 23 55 20 54.500 17.500C54 15 53.500 13.500 53 11.500z" fill="#a8713a"/>
<path d="M56 14C58 15 59.500 17 59 20C57.500 19 56.500 16.500 56 14z" fill="#d09a52"/>
<path d="M60 19C63 17 66 18 68 21V27C65 28 62 27 60 25z" fill="#7a4a20"/>
<path d="M56.500 19.500C58.500 21 59.500 24 58.500 27C57 25.500 56.500 22.500 56.500 19.500z" fill="#2a1608"/>
</svg>
<div class="t lbl" style="left:21px;top:375px;">拍摄日期:</div>
<div class="t val" style="left:81px;top:375px;">指定拍摄日期</div>
<div class="t lbl" style="left:21px;top:389.5px;">标记:</div>
<div class="t val" style="left:81px;top:389.5px;">添加标记</div>
<div class="t lbl" style="left:21px;top:404.5px;">分级:</div>
<div class="t lbl" style="left:21px;top:418.7px;">分辨率:</div>
<div class="t val" style="left:81px;top:418.7px;"><b>3840 x 2160</b></div>
<svg class="a" style="left:81px;top:403px" width="68" height="13" viewBox="0 0 68 13"><path d="M6.500 .8L8 5H12.300L8.800 7.600 10.100 11.800 6.500 9.200 2.900 11.800 4.200 7.600 .7 5H5z" transform="translate(0.8 1) scale(.88)" fill="#fff" stroke="#b8b8b8" stroke-width="1"/><path d="M6.500 .8L8 5H12.300L8.800 7.600 10.100 11.800 6.500 9.200 2.900 11.800 4.200 7.600 .7 5H5z" transform="translate(14.4 1) scale(.88)" fill="#fff" stroke="#b8b8b8" stroke-width="1"/><path d="M6.500 .8L8 5H12.300L8.800 7.600 10.100 11.800 6.500 9.200 2.900 11.800 4.200 7.600 .7 5H5z" transform="translate(28.0 1) scale(.88)" fill="#fff" stroke="#b8b8b8" stroke-width="1"/><path d="M6.500 .8L8 5H12.300L8.800 7.600 10.100 11.800 6.500 9.200 2.900 11.800 4.200 7.600 .7 5H5z" transform="translate(41.599999999999994 1) scale(.88)" fill="#fff" stroke="#b8b8b8" stroke-width="1"/><path d="M6.500 .8L8 5H12.300L8.800 7.600 10.100 11.800 6.500 9.200 2.900 11.800 4.200 7.600 .7 5H5z" transform="translate(55.199999999999996 1) scale(.88)" fill="#fff" stroke="#b8b8b8" stroke-width="1"/></svg>
<div class="a" style="left:1px;top:464px;width:637px;height:18px;background:linear-gradient(#fbfbfb 0%,#f0f0f0 40%,#d6d6d6 80%,#bfbfbf 100%);"></div>
<div class="a" style="left:0px;top:481px;width:640px;height:2px;background:#1883d7;"></div>
<div class="t " style="left:2px;top:468.5px;"><b>6</b> 个对象</div>
<div class="a" style="left:200px;top:467px;width:1px;height:13px;background:#c9c9c9;"></div>
<div class="a" style="left:201px;top:467px;width:1px;height:13px;background:#f6f6f6;"></div>
<div class="a" style="left:253px;top:467px;width:1px;height:13px;background:#c9c9c9;"></div>
<div class="a" style="left:254px;top:467px;width:1px;height:13px;background:#f6f6f6;"></div>
<div class="a" style="left:481px;top:467px;width:1px;height:13px;background:#c9c9c9;"></div>
<div class="a" style="left:482px;top:467px;width:1px;height:13px;background:#f6f6f6;"></div>
<svg class="a" style="left:205.5px;top:467px" width="11.5" height="13.5" viewBox="0 0 9 12"><path d="M4.500 .5C7.500 .5 8.500 3 8.500 6 8.500 9.500 7 11.500 4.500 11.500 2 11.500 .5 9.500 .5 6 .5 3 1.500 .5 4.500 .5z" fill="#2f7fd2" stroke="#1d5a9c" stroke-width=".8"/><path d="M4.500 3C6.300 3 7 5 7 7.200 7 9.500 6 11 4.500 11 3 11 2 9.500 2 7.200 2 5 2.700 3 4.500 3z" fill="#f4f8fc"/><path d="M4.500 .8V4.500" stroke="#dfeaf6" stroke-width=".9"/></svg>
<div class="t " style="left:221px;top:468px;"><b>1.0.1</b></div>
<svg class="a" style="left:260px;top:467px" width="12" height="13" viewBox="0 0 12 13"><path d="M6 .5C7.500 1.800 9.500 2.300 11.500 2.300 11.500 7 10 10.500 6 12.500 2 10.500 .5 7 .5 2.300 2.500 2.300 4.500 1.800 6 .5z" fill="#f3d03a" stroke="#8a7a20" stroke-width=".9"/><rect x="5.300" y="3" width="1.600" height="4.500" fill="#222"/><rect x="5.300" y="8.500" width="1.600" height="1.600" fill="#222"/></svg>
<div class="t " style="left:276px;top:468px;width:95px;overflow:hidden"><b>Administrator (</b>便携版</div>
<svg class="a" style="left:376px;top:466px" width="14" height="14" viewBox="0 0 14 14"><path d="M.5 2.500H5.500L7 4H13.500V12.500H.5z" fill="#fcd462"/><path d="M.5 2.500H5.500L7 4H.5z" fill="#d99a12"/><path d="M3 13.500V8.500C3 7.500 3.600 7 4.500 7H9.500C10.400 7 11 7.500 11 8.500V13.500H8.500V9.500H5.500V13.500z" fill="#2f86d6"/></svg>
<div class="t " style="left:392px;top:468px;">库</div>
<div class="t " style="left:484.5px;top:468px;">空闲<b>: 48.8 GB </b>在<b> 80.0 GB</b></div>
<svg class="a" style="left:628px;top:470px" width="9" height="10" viewBox="0 0 9 10"><path d="M7 1v1M7 4v1M4 4v1M7 7v1M4 7v1M1 7v1" stroke="#9a9a9a" stroke-width="1.500"/></svg>
</body></html>
